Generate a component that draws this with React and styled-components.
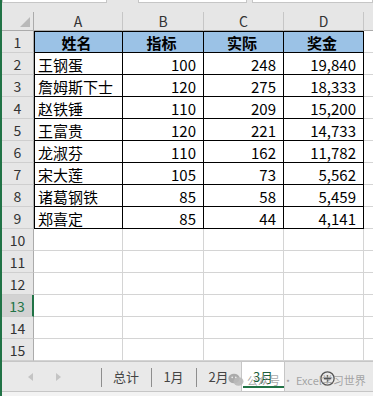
import React from 'react';
import styled, { createGlobalStyle } from 'styled-components';

const GlobalStyle = createGlobalStyle`
  html, body { margin: 0; padding: 0; background: #fff; overflow: hidden; }
  body { font-family: "Noto Sans CJK SC", "Noto Sans", sans-serif; }
`;

const Window = styled.div`
  position: relative;
  width: 373px;
  height: 396px;
  box-sizing: border-box;
  border-left: 2px solid #217346;
  display: flex;
  flex-direction: column;
  background: #fff;
  overflow: hidden;
`;

const TopStrip = styled.div`
  height: 12px;
  flex: none;
  display: flex;
  align-items: flex-start;
  background: #e6e6e6;
`;

const FieldBox = styled.div`
  height: 3px;
  box-sizing: border-box;
  background: #fff;
  border: 1px solid #c6c6c6;
  border-top: none;
  flex: ${p => (p.$w ? 'none' : '1')};
  width: ${p => (p.$w ? `${p.$w}px` : 'auto')};
  margin-left: ${p => p.$ml || 0}px;
`;

const Sheet = styled.div`
  flex: none;
  display: grid;
  grid-template-columns: 32px 89px 81px 80px 80px 1fr;
  grid-template-rows: 19px repeat(15, 22px);
`;

const ColHead = styled.div`
  position: relative;
  box-sizing: border-box;
  display: flex;
  align-items: center;
  justify-content: center;
  background: #e6e6e6;
  border-right: 1px solid #c6c6c6;
  border-bottom: 1px solid #ababab;
  font-size: 14px;
  color: #333;
`;

const Corner = styled(ColHead)`
  border-right-color: #ababab;
  &::after {
    content: '';
    position: absolute;
    right: 3px;
    bottom: 3px;
    width: 0;
    height: 0;
    border-left: 10px solid transparent;
    border-bottom: 10px solid #b9b9b9;
  }
`;

const RowHead = styled.div`
  box-sizing: border-box;
  display: flex;
  align-items: center;
  justify-content: center;
  background: ${p => (p.$sel ? '#d2d2d2' : '#e6e6e6')};
  color: ${p => (p.$sel ? '#217346' : '#333')};
  border-right: ${p => (p.$sel ? '2px solid #217346' : '1px solid #ababab')};
  border-bottom: 1px solid #cfcfcf;
  font-size: 14px;
  padding-top: 1px;
`;

const justify = { left: 'flex-start', right: 'flex-end', center: 'center' };

const Cell = styled.div`
  box-sizing: border-box;
  display: flex;
  align-items: center;
  justify-content: ${p => justify[p.$align || 'left']};
  padding: 1px 7px 0 4px;
  white-space: nowrap;
  overflow: hidden;
  font-size: 15px;
  color: #000;
  background: ${p => (p.$head ? '#9bc2e6' : '#fff')};
  font-weight: ${p => (p.$head ? 700 : 400)};
  border-right: 1px solid ${p => (p.$table ? '#000' : '#d4d4d4')};
  border-bottom: 1px solid ${p => (p.$table ? '#000' : '#d4d4d4')};
  box-shadow: ${p =>
    [p.$first ? 'inset 1px 0 0 #000' : null, p.$top ? 'inset 0 1px 0 #000' : null]
      .filter(Boolean)
      .join(', ') || 'none'};
`;

const TabBar = styled.div`
  flex: none;
  height: 30px;
  box-sizing: border-box;
  border-top: 1px solid #c6c6c6;
  background: #e9e9e9;
  display: flex;
  align-items: stretch;
`;

const Nav = styled.div`
  width: 99px;
  flex: none;
  display: flex;
  align-items: center;
  gap: 23px;
  padding-left: 26px;
  box-sizing: border-box;
`;

const Tab = styled.div`
  position: relative;
  flex: none;
  width: ${p => p.$w}px;
  box-sizing: border-box;
  display: flex;
  align-items: center;
  justify-content: center;
  font-size: 13px;
  color: #444;
  &::before {
    content: '';
    position: absolute;
    left: 0;
    top: 6px;
    bottom: 4px;
    width: 1px;
    background: #8e8e8e;
  }
`;

const ActiveTab = styled(Tab)`
  background: #fff;
  border-left: 1px solid #c6c6c6;
  border-right: 1px solid #c6c6c6;
  color: #1d5f3b;
  &::before {
    display: none;
  }
  &::after {
    content: '';
    position: absolute;
    left: 1px;
    right: 0;
    bottom: 3px;
    height: 2px;
    background: #217346;
  }
`;

const AddButton = styled.div`
  flex: none;
  margin-left: 35px;
  display: flex;
  align-items: center;
  padding-top: 3px;
`;

const StatusStrip = styled.div`
  flex: 1;
  background: #f3f3f3;
  border-top: 1px solid #c6c6c6;
`;

const Watermark = styled.div`
  position: absolute;
  left: 226px;
  top: 372px;
  display: flex;
  align-items: center;
  gap: 3px;
  font-size: 11px;
  color: rgba(150, 150, 150, 0.85);
  white-space: nowrap;
  pointer-events: none;
`;

const Arrow = ({ dir }) => (
  <svg width="5" height="8" viewBox="0 0 5 8">
    <polygon points={dir === 'left' ? '5,0 0,4 5,8' : '0,0 5,4 0,8'} fill="#c4c4c4" />
  </svg>
);

const WeChat = () => (
  <svg width="16" height="14" viewBox="0 0 16 14">
    <ellipse cx="6" cy="5.5" rx="5.6" ry="4.8" fill="rgba(160,160,160,0.85)" />
    <ellipse cx="10.5" cy="8.5" rx="5" ry="4.2" fill="rgba(185,185,185,0.9)" />
    <circle cx="4.2" cy="4.4" r="0.8" fill="#eee" />
    <circle cx="7.8" cy="4.4" r="0.8" fill="#eee" />
  </svg>
);

const columns = ['A', 'B', 'C', 'D', ''];
const header = ['姓名', '指标', '实际', '奖金'];
const rows = [
  ['王钢蛋', '100', '248', '19,840'],
  ['詹姆斯下士', '120', '275', '18,333'],
  ['赵铁锤', '110', '209', '15,200'],
  ['王富贵', '120', '221', '14,733'],
  ['龙淑芬', '110', '162', '11,782'],
  ['宋大莲', '105', '73', '5,562'],
  ['诸葛钢铁', '85', '58', '5,459'],
  ['郑喜定', '85', '44', '4,141'],
];

export default function App() {
  const body = [];
  for (let r = 1; r <= 15; r++) {
    body.push(
      <RowHead key={`h${r}`} $sel={r === 13}>
        {r}
      </RowHead>
    );
    for (let c = 0; c < 5; c++) {
      const inTable = r <= 9 && c < 4;
      let text = '';
      let align = 'left';
      if (r === 1 && c < 4) {
        text = header[c];
        align = 'center';
      } else if (inTable) {
        text = rows[r - 2][c];
        align = c === 0 ? 'left' : 'right';
      }
      body.push(
        <Cell
          key={`c${r}-${c}`}
          $table={inTable}
          $head={r === 1 && c < 4}
          $first={inTable && c === 0}
          $top={r === 1 && c < 4}
          $align={align}
        >
          {text}
        </Cell>
      );
    }
  }

  return (
    <>
      <GlobalStyle />
      <Window>
        <TopStrip>
          <FieldBox $w={105} />
          <FieldBox $w={109} $ml={31} />
          <FieldBox $ml={5} />
        </TopStrip>
        <Sheet>
          <Corner />
          {columns.map((c, i) => (
            <ColHead key={i}>{c}</ColHead>
          ))}
          {body}
        </Sheet>
        <TabBar>
          <Nav>
            <Arrow dir="left" />
            <Arrow dir="right" />
          </Nav>
          <Tab $w={50}>总计</Tab>
          <Tab $w={45}>1月</Tab>
          <Tab $w={45}>2月</Tab>
          <ActiveTab $w={44}>3月</ActiveTab>
          <AddButton>
            <svg width="15" height="15" viewBox="0 0 15 15">
              <circle cx="7.5" cy="7.5" r="6.6" fill="none" stroke="#555" strokeWidth="1.3" />
              <path d="M7.5 4v7M4 7.5h7" stroke="#555" strokeWidth="1.3" />
            </svg>
          </AddButton>
        </TabBar>
        <StatusStrip />
        <Watermark>
          <WeChat />
          <span>公众号 · Excel学习世界</span>
        </Watermark>
      </Window>
    </>
  );
}
